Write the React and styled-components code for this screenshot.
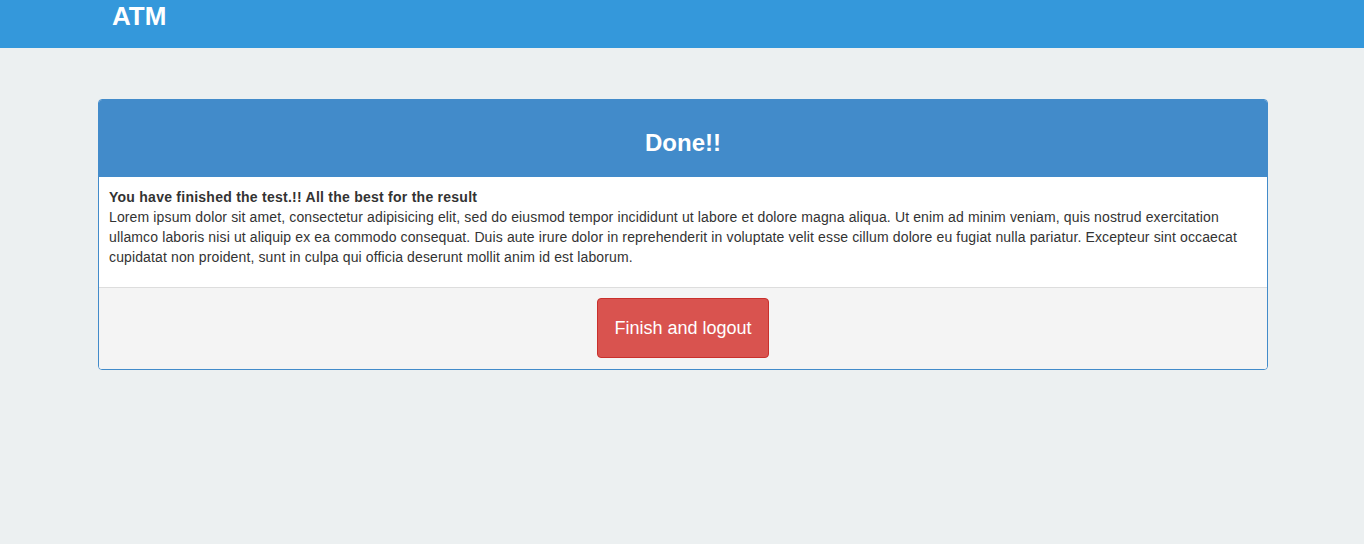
import React from "react";
import styled, { createGlobalStyle } from "styled-components";

const GlobalStyle = createGlobalStyle`
  body {
    margin: 0;
    background-color: #ecf0f1;
    font-family: "Liberation Sans", Arial, sans-serif;
    font-size: 14px;
    line-height: 20px;
    color: #333;
  }
`;

const Navbar = styled.div`
  background-color: #3498db;
  height: 48px;
`;

const Container = styled.div`
  width: 1170px;
  margin: 0 auto;
  box-sizing: border-box;
`;

const Brand = styled.div`
  padding: 0 15px;
  height: 32px;
  display: flex;
  align-items: center;
  color: #fff;
  font-size: 26px;
  font-weight: bold;
`;

const Main = styled.div`
  padding: 51px 96px 0 98px;
`;

const Panel = styled.div`
  border: 1px solid #428bca;
  border-radius: 4px;
  background-color: #fff;
  overflow: hidden;
`;

const PanelHeading = styled.div`
  background-color: #428bca;
  color: #fff;
  padding: 10px 15px 11px;
  text-align: center;
`;

const HeadingTitle = styled.h3`
  margin: 20px 0 10px;
  font-size: 24px;
  line-height: 26px;
  font-weight: bold;
`;

const PanelBody = styled.div`
  padding: 10px;
  letter-spacing: 0.13px;
`;

const Lead = styled.div`
  font-weight: bold;
  letter-spacing: 0.25px;
`;

const Text = styled.p`
  margin: 0 0 10px;
`;

const PanelFooter = styled.div`
  background-color: #f4f4f4;
  border-top: 1px solid #ddd;
  padding: 10px 10px 11px;
  display: flex;
  justify-content: center;
`;

const DangerButton = styled.button`
  background-color: #d9534f;
  border: 1px solid #c9302c;
  border-radius: 4px;
  color: #fff;
  font-family: "Liberation Sans", Arial, sans-serif;
  font-size: 18px;
  height: 60px;
  width: 172px;
  cursor: pointer;
`;

const App = () => {
  return (
    <>
      <GlobalStyle />
      <Navbar>
        <Container>
          <Brand>ATM</Brand>
        </Container>
      </Navbar>
      <Main>
        <Panel>
          <PanelHeading>
            <HeadingTitle>Done!!</HeadingTitle>
          </PanelHeading>
          <PanelBody>
            <Lead>You have finished the test.!! All the best for the result</Lead>
            <Text>
              Lorem ipsum dolor sit amet, consectetur adipisicing elit, sed do eiusmod tempor incididunt ut labore et
              dolore magna aliqua. Ut enim ad minim veniam, quis nostrud exercitation ullamco laboris nisi ut aliquip ex
              ea commodo consequat. Duis aute irure dolor in reprehenderit in voluptate velit esse cillum dolore eu
              fugiat nulla pariatur. Excepteur sint occaecat cupidatat non proident, sunt in culpa qui officia deserunt
              mollit anim id est laborum.
            </Text>
          </PanelBody>
          <PanelFooter>
            <DangerButton>Finish and logout</DangerButton>
          </PanelFooter>
        </Panel>
      </Main>
    </>
  );
};

export default App;
